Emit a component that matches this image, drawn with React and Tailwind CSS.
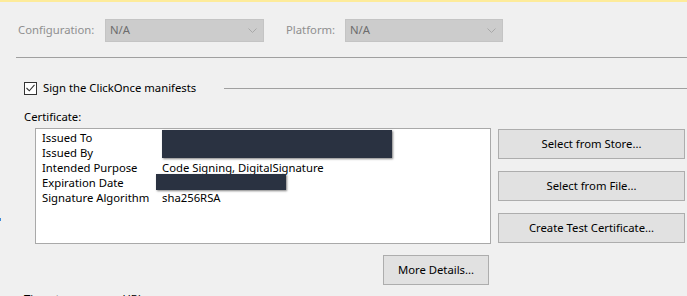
import React from 'react';

const font = { fontFamily: '"Segoe UI", "Noto Sans", "Open Sans", sans-serif' };

const Combo = ({ width }) => (
  <div className={`${width} h-[23px] bg-[#cccccc] border border-[#c4c4c4] flex items-center justify-between pl-[4px] pr-[6px] text-[#6d6d6d]`}>
    <span>N/A</span>
    <svg width="9" height="5" viewBox="0 0 9 5" className="text-[#a8a8a8]">
      <path d="M0.5 0.5 L4.5 4.5 L8.5 0.5" fill="none" stroke="currentColor" strokeWidth="1" />
    </svg>
  </div>
);

const WinButton = ({ children, className = '' }) => (
  <button className={`h-[30px] bg-[#e1e1e1] border border-[#adadad] text-black text-[11.3px] flex items-center justify-center ${className}`}>
    {children}
  </button>
);

const rows = [
  ['Issued To', ''],
  ['Issued By', ''],
  ['Intended Purpose', 'Code Signing, DigitalSignature'],
  ['Expiration Date', ''],
  ['Signature Algorithm', 'sha256RSA'],
];

export default function App() {
  return (
    <div className="w-[687px] h-[296px] overflow-hidden bg-[#f0f0f0] text-[11.3px] text-black relative" style={font}>
      <div className="h-[2px] bg-[#fdeb9a]"></div>

      {/* Configuration / Platform */}
      <div className="flex items-center mt-[17px] h-[23px]">
        <span className="ml-[18px] w-[87px] text-[#8f8f8f]">Configuration:</span>
        <Combo width="w-[159px]" />
        <span className="ml-[22px] w-[59px] text-[#8f8f8f]">Platform:</span>
        <Combo width="w-[158px]" />
      </div>

      <div className="ml-[16px] mt-[15px] h-px bg-[#a0a0a0]"></div>

      {/* Sign checkbox */}
      <div className="flex items-center mt-[22px] h-[16px] pl-[24px]">
        <div className="w-[13px] h-[13px] border border-[#333333] bg-white flex items-center justify-center">
          <svg width="9" height="8" viewBox="0 0 9 8">
            <path d="M0.5 4 L3.3 6.8 L8.5 0.8" fill="none" stroke="#333333" strokeWidth="1.1" />
          </svg>
        </div>
        <span className="ml-[6px]">Sign the ClickOnce manifests</span>
        <div className="flex-1 ml-[28px] h-px bg-[#a0a0a0]"></div>
      </div>

      <div className="pl-[24px] mt-[13px] h-[16px] leading-[16px]">Certificate:</div>

      {/* Certificate list + buttons */}
      <div className="flex mt-[3px] pl-[35px] gap-[7px]">
        <div className="relative w-[456px] h-[116px] bg-white border border-[#a9a9a9] pl-[6px] pt-[1px]">
          {rows.map(([label, value]) => (
            <div key={label} className="grid grid-cols-[120px_1fr] h-[15px] leading-[15px]">
              <span>{label}</span>
              <span>{value}</span>
            </div>
          ))}
          <div className="absolute left-[126px] top-[1px] w-[230px] h-[28px] bg-[#2a3241] shadow-[1px_1px_2px_rgba(0,0,0,0.5)]"></div>
          <div className="absolute left-[120px] top-[45px] w-[130px] h-[16px] bg-[#2a3241] shadow-[1px_1px_2px_rgba(0,0,0,0.5)]"></div>
        </div>
        <div className="flex flex-col gap-[12px] pt-[1px]">
          <WinButton className="w-[187px]">Select from Store...</WinButton>
          <WinButton className="w-[187px]">Select from File...</WinButton>
          <WinButton className="w-[187px]">Create Test Certificate...</WinButton>
        </div>
      </div>

      <div className="flex mt-[11px] pl-[383px]">
        <WinButton className="w-[106px]">More Details...</WinButton>
      </div>

      <div className="pl-[24px] mt-[6px] h-[16px] leading-[16px]">Timestamp server URL:</div>

      <div className="absolute left-0 top-[218px] w-px h-[3px] bg-[#3c8bd9]"></div>
    </div>
  );
}
